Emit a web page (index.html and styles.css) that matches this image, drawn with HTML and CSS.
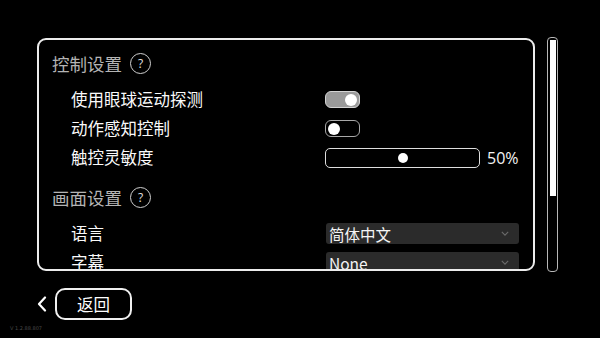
FILE: index.html
```html
<!DOCTYPE html>
<html lang="zh">
<head>
<meta charset="utf-8">
<title>设置</title>
<link rel="stylesheet" href="styles.css">
</head>
<body>
<div class="screen">
  <div class="top">
    <div class="panel">
      <div class="content">
        <div class="heading"><span>控制设置</span><span class="help">?</span></div>
        <div class="row">
          <span class="label">使用眼球运动探测</span>
          <span class="toggle on"><span class="knob"></span></span>
        </div>
        <div class="row">
          <span class="label">动作感知控制</span>
          <span class="toggle"><span class="knob"></span></span>
        </div>
        <div class="row">
          <span class="label">触控灵敏度</span>
          <span class="slider-wrap"><span class="slider"><span class="sknob"></span></span><span class="pct">50%</span></span>
        </div>
        <div class="heading h2"><span>画面设置</span><span class="help">?</span></div>
        <div class="row">
          <span class="label">语言</span>
          <span class="select"><span>简体中文</span><svg class="chev" viewBox="0 0 10 6" width="8" height="5"><polyline points="1,1 5,5 9,1" fill="none" stroke="#6a6a6a" stroke-width="1.4"/></svg></span>
        </div>
        <div class="row">
          <span class="label">字幕</span>
          <span class="select"><span>None</span><svg class="chev" viewBox="0 0 10 6" width="8" height="5"><polyline points="1,1 5,5 9,1" fill="none" stroke="#6a6a6a" stroke-width="1.4"/></svg></span>
        </div>
      </div>
    </div>
    <div class="scrollbar"><div class="thumb"></div></div>
  </div>
  <div class="bottom">
    <svg class="back-chev" viewBox="0 0 10 16" width="10" height="16"><polyline points="8,1.5 2,8 8,14.5" fill="none" stroke="#fff" stroke-width="2.2" stroke-linecap="round" stroke-linejoin="round"/></svg>
    <div class="back-btn">返回</div>
  </div>
  <div class="version">V 1.2.88.807</div>
</div>
</body>
</html>
```
FILE: styles.css
```css
html, body {
  margin: 0;
  padding: 0;
  background: #000;
}
body {
  font-family: "Noto Sans CJK SC", "Noto Sans", sans-serif;
  color: #fff;
}
.screen {
  width: 600px;
  height: 338px;
  overflow: hidden;
  display: flex;
  flex-direction: column;
}
.top {
  display: flex;
  align-items: flex-start;
  padding-left: 37px;
  padding-top: 37px;
}
.panel {
  box-sizing: border-box;
  width: 498px;
  height: 233px;
  margin-top: 1px;
  border: 2px solid #ececec;
  border-radius: 9px;
  overflow: hidden;
}
.content {
  padding: 11px 0 0 13px;
}
.heading {
  height: 24px;
  display: flex;
  align-items: center;
  font-size: 17.5px;
  color: #b4b4b4;
  margin-bottom: 10px;
}
.heading.h2 {
  margin-top: 13px;
  margin-bottom: 10px;
}
.help {
  box-sizing: border-box;
  width: 21px;
  height: 21px;
  margin-left: 8px;
  margin-top: 1px;
  border: 1.5px solid #d0d0d0;
  border-radius: 50%;
  display: flex;
  align-items: center;
  justify-content: center;
  font-size: 12px;
  color: #e0e0e0;
  font-family: "Open Sans", sans-serif;
}
.row {
  height: 29px;
  display: flex;
  align-items: center;
  padding-left: 19px;
}
.label {
  width: 254px;
  font-size: 16.5px;
  color: #fafafa;
  margin-top: -2px;
}
.toggle {
  box-sizing: border-box;
  width: 35px;
  height: 17px;
  border: 1.5px solid #a8a8a8;
  border-radius: 6px;
  background: #000;
  display: flex;
  align-items: center;
  padding: 0 2px;
}
.toggle.on {
  background: #9a9a9a;
  border-color: #d4d4d4;
  justify-content: flex-end;
}
.knob {
  width: 12px;
  height: 12px;
  border-radius: 50%;
  background: #fff;
}
.slider-wrap {
  display: flex;
  align-items: center;
}
.slider {
  box-sizing: border-box;
  width: 155px;
  height: 20px;
  border: 1.5px solid #dedede;
  border-radius: 5px;
  display: flex;
  align-items: center;
  justify-content: center;
}
.sknob {
  width: 10px;
  height: 10px;
  border-radius: 50%;
  background: #fff;
}
.pct {
  margin-left: 7px;
  font-size: 16px;
  font-family: "Open Sans", sans-serif;
  color: #f4f4f4;
}
.select {
  box-sizing: border-box;
  width: 193px;
  height: 21px;
  margin-left: 1px;
  background: #2b2b2b;
  border-radius: 3px;
  display: flex;
  align-items: center;
  justify-content: space-between;
  padding: 0 10px 0 3px;
  font-size: 15.5px;
  color: #f4f4f4;
}
.select span {
  line-height: 21px;
  margin-top: 1px;
}
.chev {
  display: block;
}
.scrollbar {
  box-sizing: border-box;
  width: 11px;
  height: 235px;
  margin-left: 12px;
  border: 1.5px solid #b8b8b8;
  border-radius: 4px;
  padding: 2px 1.5px 0;
}
.thumb {
  height: 156px;
  background: #fff;
}
.bottom {
  display: flex;
  align-items: center;
  padding-left: 37px;
  margin-top: 16px;
}
.back-chev {
  display: block;
}
.back-btn {
  box-sizing: border-box;
  width: 77px;
  height: 32px;
  margin-left: 8px;
  border: 2px solid #f0f0f0;
  border-radius: 10px;
  display: flex;
  align-items: center;
  justify-content: center;
  font-size: 16.5px;
  color: #fff;
}
.version {
  margin-top: 5px;
  padding-left: 10px;
  font-size: 5px;
  color: #4a4a4a;
  font-family: "DejaVu Sans", sans-serif;
}
```
